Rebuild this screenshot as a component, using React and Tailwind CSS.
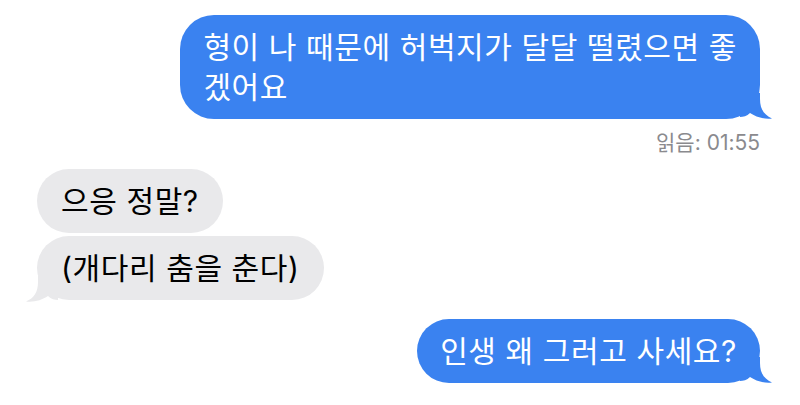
import React from 'react';

// 말풍선 꼬리 (오른쪽 / 왼쪽)
function Tail({ side, color }) {
  if (side === 'right') {
    return (
      <svg
        className="absolute right-[-12px] bottom-0"
        width="32"
        height="26"
        viewBox="0 0 32 26"
      >
        <path d="M0 0 H20 V6 C20 16 24 22 32 25.5 C24 26.5 16 24 10 20 C7 23 3 24 0 24 Z" fill={color} />
      </svg>
    );
  }
  return (
    <svg
      className="absolute left-[-11px] bottom-[-2px]"
      width="32"
      height="26"
      viewBox="0 0 32 26"
    >
      <path d="M32 0 H12 V6 C12 16 8 22 0 25.5 C8 26.5 16 24 22 20 C25 23 29 24 32 24 Z" fill={color} />
    </svg>
  );
}

function Sent({ children, className = '' }) {
  return (
    <div className={'relative self-end bg-[#3a82f0] text-white rounded-[34px] px-[23px] py-[12px] ' + className}>
      <p className="relative z-10 text-[30px] leading-[40px] tracking-[0.6px]">{children}</p>
      <Tail side="right" color="#3a82f0" />
    </div>
  );
}

function Received({ children, tail, className = '' }) {
  return (
    <div className={'relative self-start bg-[#e9e9eb] text-black rounded-[32px] px-[24px] py-[12px] ' + className}>
      <p className="relative z-10 text-[30px] leading-[40px] tracking-[0.6px]">{children}</p>
      {tail && <Tail side="left" color="#e9e9eb" />}
    </div>
  );
}

export default function App() {
  return (
    <div className="w-[800px] h-[405px] bg-white overflow-hidden font-['Inter','Noto_Sans_CJK_KR',sans-serif]">
      <div className="flex flex-col pl-[37px] pr-[40px] pt-[15px]">
        {/* 보낸 메시지 */}
        <Sent>
          형이 나 때문에 허벅지가 달달 떨렸으면 좋<br />겠어요
        </Sent>
        <p className="self-end mt-[11px] text-[21px] leading-[26px] text-[#8a8a8e]">읽음: 01:55</p>

        {/* 받은 메시지 */}
        <Received className="mt-[13px]">으응 정말?</Received>
        <Received className="mt-[3px]" tail>
          (개다리 춤을 춘다)
        </Received>

        <Sent className="mt-[19px]">인생 왜 그러고 사세요?</Sent>
      </div>
    </div>
  );
}
